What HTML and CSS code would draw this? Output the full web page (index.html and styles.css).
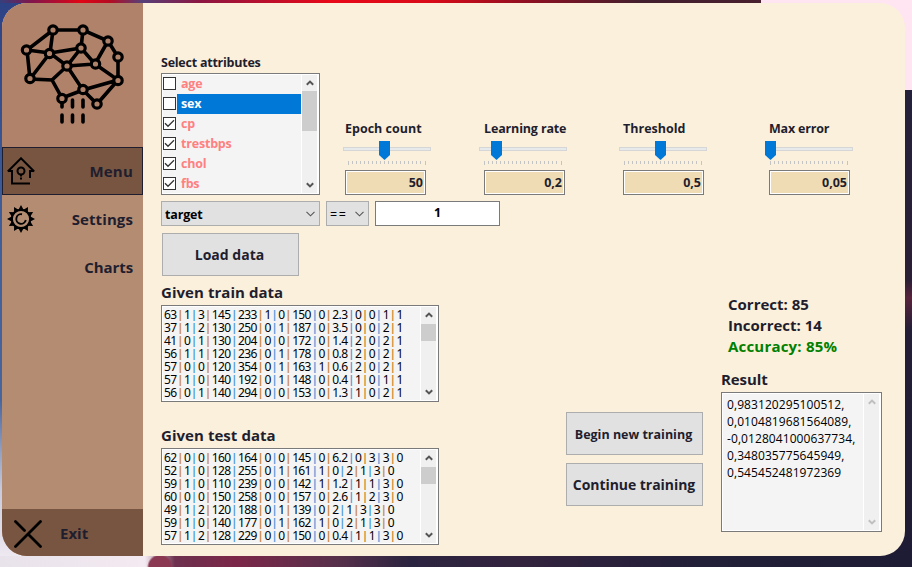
FILE: index.html
```html
<!DOCTYPE html>
<html lang="en">
<head>
<meta charset="utf-8">
<title>Training</title>
<link rel="stylesheet" href="styles.css">
</head>
<body>
<svg class="defs" width="0" height="0">
  <symbol id="up" viewBox="0 0 8 6"><path d="M.8 4.8 4 1.6l3.2 3.2" fill="none" stroke="currentColor" stroke-width="2"/></symbol>
  <symbol id="down" viewBox="0 0 8 6"><path d="M.8 1.2 4 4.4l3.2-3.2" fill="none" stroke="currentColor" stroke-width="2"/></symbol>
  <symbol id="combo" viewBox="0 0 9 6"><path d="M.5.8l4 4 4-4" fill="none" stroke="#555" stroke-width="1.1"/></symbol>
  <symbol id="check" viewBox="0 0 11 11"><path d="M1 5.3l3 3L10 2.3" fill="none" stroke="#333" stroke-width="1.3"/></symbol>
</svg>
<div class="desktop">
<div class="window">
  <nav class="sidebar">
    <div class="logo">
      <svg width="141" height="144" viewBox="2 3 141 144" fill="none" stroke="#000" stroke-width="3.6" stroke-linecap="round">
        <path d="M53 30H83L108 41L118 57V80L97 104L83 90L118 80L95 64L108 41M53 30L27 50L30 79L52 80L62 98L83 90L67 66L95 64L81 48L83 30M53 30L50 53L27 50M50 53L81 48L67 66L50 53L30 79M67 66L52 80M62 98V107M72.500 100V107M83 100V107M62 115V122M72.500 115V122M83 115V122"/>
        <g fill="#b0826a" stroke-width="3.200"><circle cx="53" cy="30" r="4.200"/><circle cx="83" cy="30" r="4.200"/><circle cx="108" cy="41" r="4.200"/><circle cx="118" cy="57" r="4.200"/><circle cx="118" cy="80.500" r="4.200"/><circle cx="97" cy="104" r="4.200"/><circle cx="83" cy="89.500" r="4.200"/><circle cx="62" cy="98.500" r="4.200"/><circle cx="30" cy="78.500" r="4.200"/><circle cx="26.500" cy="50" r="4.200"/><circle cx="49.500" cy="53.500" r="4.200"/><circle cx="81" cy="48" r="4.200"/><circle cx="67" cy="66" r="4.200"/><circle cx="95.500" cy="64" r="4.200"/></g>
      </svg>
    </div>
    <div class="item active">
      <svg width="28" height="28" viewBox="0 0 28 28" fill="none" stroke="#000" stroke-width="2"><path d="M.8 14.500 14 1.300 27.200 14.500M1 14H5V26.500H23M27 14H23V21"/><circle cx="14" cy="14" r="3.500"/><path d="M14 18v1.500M14 20.500v2"/></svg>
      <span class="t-menu">Menu</span>
    </div>
    <div class="item">
      <svg width="28" height="28" viewBox="0 0 28 28" fill="none" stroke="#000" stroke-width="2.200"><circle cx="14" cy="14" r="9.200"/><g fill="#000" stroke="none"><path id="teeth" d="M14 0 17 5.500H11ZM14 28 17 22.500H11ZM0 14 5.500 11V17ZM28 14 22.500 11V17Z"/><use href="#teeth" transform="rotate(30 14 14)"/><use href="#teeth" transform="rotate(60 14 14)"/></g><path d="M15 9.300A4.800 4.800 0 1 0 18.800 15" stroke-width="1.900"/></svg>
      <span class="t-settings">Settings</span>
    </div>
    <div class="item"><span class="t-charts">Charts</span></div>
    <div class="exit">
      <svg width="28" height="28" viewBox="0 0 28 28" stroke="#000" stroke-width="2.800" stroke-linecap="round"><path d="M1.500 1.500 10.500 10.500M26.500 1.500 1.500 26.500M15 15 26.500 26.500"/></svg>
      <span>Exit</span>
    </div>
  </nav>
  <main>
    <section class="top">
      <div class="select">
        <div class="label attr-label">Select attributes</div>
        <div class="listbox checklist">
          <ul>
            <li><i class="box"></i><span>age</span></li>
            <li class="sel"><i class="box"></i><span>sex</span></li>
            <li><i class="box"><svg><use href="#check"/></svg></i><span>cp</span></li>
            <li><i class="box"><svg><use href="#check"/></svg></i><span>trestbps</span></li>
            <li><i class="box"><svg><use href="#check"/></svg></i><span>chol</span></li>
            <li><i class="box"><svg><use href="#check"/></svg></i><span>fbs</span></li>
          </ul>
          <div class="scroll"><svg><use href="#up"/></svg><b class="thumb tall"></b><svg class="end"><use href="#down"/></svg></div>
        </div>
      </div>
      <div class="param epoch"><div class="label">Epoch count</div><svg class="slider" viewBox="0 0 88 26"><rect x=".5" y="6.500" width="87" height="3" fill="#e7eaea" stroke="#d6d6d6"/><path d="M5.500 20V24M82.500 20V24" class="tick"/><path d="M9 20.500H79" class="ticks"/><path d="M36 0H47V14L41.500 19 36 14Z" fill="#0078d7"/></svg><div class="value">50</div></div>
      <div class="param rate"><div class="label">Learning rate</div><svg class="slider" viewBox="0 0 88 26"><rect x=".5" y="6.500" width="87" height="3" fill="#e7eaea" stroke="#d6d6d6"/><path d="M5.500 20V24M82.500 20V24" class="tick"/><path d="M9 20.500H79" class="ticks"/><path d="M12 0H23V14L17.500 19 12 14Z" fill="#0078d7"/></svg><div class="value">0,2</div></div>
      <div class="param threshold"><div class="label">Threshold</div><svg class="slider" viewBox="0 0 88 26"><rect x=".5" y="6.500" width="87" height="3" fill="#e7eaea" stroke="#d6d6d6"/><path d="M5.500 20V24M82.500 20V24" class="tick"/><path d="M9 20.500H79" class="ticks"/><path d="M36 0H47V14L41.500 19 36 14Z" fill="#0078d7"/></svg><div class="value">0,5</div></div>
      <div class="param error"><div class="label">Max error</div><svg class="slider" viewBox="0 0 88 26"><rect x=".5" y="6.500" width="87" height="3" fill="#e7eaea" stroke="#d6d6d6"/><path d="M5.500 20V24M82.500 20V24" class="tick"/><path d="M9 20.500H79" class="ticks"/><path d="M0 0H11V14L5.500 19 0 14Z" fill="#0078d7"/></svg><div class="value">0,05</div></div>
    </section>
    <section class="filter">
      <div class="combo field">target<svg><use href="#combo"/></svg></div>
      <div class="combo op">==<svg><use href="#combo"/></svg></div>
      <div class="input">1</div>
    </section>
    <button class="load">Load data</button>
    <section class="lower">
      <div class="data">
        <h2 class="h-train">Given train data</h2>
        <div class="listbox rows"><div class="lines" id="train"></div><div class="scroll"><svg><use href="#up"/></svg><b class="thumb"></b><svg class="end"><use href="#down"/></svg></div></div>
        <h2 class="h-test">Given test data</h2>
        <div class="listbox rows"><div class="lines" id="test"></div><div class="scroll"><svg><use href="#up"/></svg><b class="thumb"></b><svg class="end"><use href="#down"/></svg></div></div>
      </div>
      <div class="actions">
        <button class="begin">Begin new training</button>
        <button class="continue">Continue training</button>
      </div>
      <div class="outcome">
        <div class="stats"><div class="s1">Correct: 85</div><div class="s2">Incorrect: 14</div><div class="good">Accuracy: 85%</div></div>
        <h2 class="h-result">Result</h2>
        <div class="listbox result">
          <div class="numbers">0,983120295100512,<br>0,0104819681564089,<br>-0,0128041000637734,<br>0,348035775645949,<br>0,545452481972369</div>
          <div class="scroll off"><svg><use href="#up"/></svg><svg class="end"><use href="#down"/></svg></div>
        </div>
      </div>
    </section>
  </main>
</div>
</div>
<script src="rows.js"></script>
</body>
</html>
```
FILE: styles.css
```css
* { box-sizing: border-box; }
body { margin: 0; width: 912px; height: 567px; overflow: hidden; font-family: "Open Sans", "Noto Sans", sans-serif; color: #1f1e2e; }
.defs { position: absolute; }
.desktop {
  width: 912px; height: 567px; padding: 3px 7px 11px 2px;
  background:
    linear-gradient(#ffe5f2, #ffe5f2) 761px 0 / 151px 90px no-repeat,
    radial-gradient(circle at 160px 567px, #8b3852 0 11px, transparent 13px),
    linear-gradient(90deg, #e8e2eb 0, #f4eaf1 145px, #6d304e 175px, #7c2749 235px, #56304b 340px, #2b2440 410px, #33233f 520px, #221f38 700px, #1e1c34 912px) 0 556px / 912px 11px no-repeat,
    linear-gradient(90deg, #35407c 0, #7e164e 30px, #e00514 80px, #b40b22 110px, #554079 142px, #8c1642 200px, #e80818 330px, #d90a18 430px, #8c1022 530px, #43202e 640px, #48202f 761px) 0 0 / 761px 3px no-repeat,
    linear-gradient(#2d4285 0, #3d5c98 200px, #48659d 400px, #c8cbdc 490px, #eee8f0 556px) 0 0 / 30px 567px no-repeat,
    linear-gradient(#25213a 90px, #2a1f35 280px, #57243c 298px, #231e36 330px, #1e1c34 567px);
}
.window { display: flex; width: 903px; height: 553px; border-radius: 25px; overflow: hidden; background: #fbf0dc; }
.sidebar { display: flex; flex-direction: column; width: 141px; background: #b48c72; font-weight: 700; font-size: 15px; }
.logo { height: 144px; background: #b0826a; }
.logo svg, .item svg, .exit svg { display: block; }
.item { display: flex; align-items: center; height: 48px; padding: 0 10px 0 5px; }
.item span { margin-left: auto; }
.t-menu { letter-spacing: .2px; }
.t-settings { letter-spacing: .1px; }
.t-charts { letter-spacing: -.1px; }
.item.active { border: 1px solid #1f1e2e; padding: 0 9px 0 4px; background: #785541; }
.exit { display: flex; align-items: center; gap: 18px; height: 47px; margin-top: auto; padding-left: 12px; background: #785541; }
.exit svg { margin-top: 3px; }
main { display: flex; flex-direction: column; width: 762px; padding: 50px 0 0 18px; }
.label { font-weight: 700; font-size: 12.500px; line-height: 18px; white-space: nowrap; }
.attr-label { padding-top: 1px; letter-spacing: -.24px; }
.top { display: flex; height: 142px; }
.select { width: 159px; }
.listbox { display: flex; border: 1px solid #7a7a7a; background: #f4f4f4; box-shadow: inset 0 0 0 1px #fff; }
.checklist { height: 122px; margin-top: 1px; }
ul { list-style: none; margin: 0; padding: 0 0 0 1px; flex: 1; font-weight: 700; font-size: 12.500px; line-height: 20px; letter-spacing: -.2px; color: #ff8080; }
li { display: flex; height: 20px; }
li span { flex: 1; height: 20px; padding-left: 4px; margin-left: 1px; }
.sel span { background: #0078d7; color: #fff; }
.box { width: 13px; height: 13px; margin-top: 3px; border: 1px solid #333; background: #fff; }
.box svg { display: block; width: 11px; height: 11px; }
.scroll { display: flex; flex-direction: column; align-items: center; width: 17px; margin: 1px 1px 1px 0; padding: 5px 0; border: solid #fff; border-width: 0 1px; background: #f0f0f0; color: #555; }
.scroll svg { width: 8px; height: 6px; flex: none; }
.scroll .end { margin-top: auto; }
.thumb { width: 15px; height: 17px; margin-top: 6px; background: #cdcdcd; }
.thumb.tall { height: 40px; margin-top: 5px; }
.scroll.off { color: #bfbfbf; }
.param { padding-top: 67px; }
.param .label { margin-left: 2px; }
.slider { display: block; width: 88px; height: 26px; margin-top: 3px; }
.tick { stroke: #c4c4c4; }
.ticks { stroke: #c4c4c4; stroke-width: 3; stroke-dasharray: 1 3; transform: translateY(1px); }
.epoch { margin-left: 23px; width: 88px; }
.rate { margin-left: 48px; width: 88px; }
.threshold { margin-left: 52px; width: 88px; }
.error { margin-left: 58px; width: 88px; }
.rate .label { margin-left: 5px; letter-spacing: -.15px; }
.threshold .label { margin-left: 4px; }
.error .label { margin-left: 4px; letter-spacing: -.2px; }
.value { width: 81px; height: 25px; margin: 3px 0 0 2px; padding-right: 2px; border: 1px solid #7a7a7a; box-shadow: inset 0 0 0 1px #fff; background: #efdcb5; font-weight: 700; font-size: 12.500px; line-height: 23px; text-align: right; }
.rate .value { margin-left: 5px; }
.threshold .value, .error .value { margin-left: 4px; }
.filter { display: flex; gap: 6px; margin-top: 6px; height: 25px; }
.combo { display: flex; align-items: center; justify-content: space-between; padding: 1px 4px 0 3px; border: 1px solid #adadad; background: #e1e1e1; font-size: 12.500px; font-weight: 700; letter-spacing: -.15px; color: #000; }
.combo svg { width: 9px; height: 6px; }
.field { width: 159px; }
.op { width: 43px; font-weight: 400; letter-spacing: 1.500px; }
.input { width: 125px; border: 1px solid #7a7a7a; background: #fff; color: #000; font-weight: 700; font-size: 12.500px; line-height: 22px; text-align: center; }
button { width: 137px; height: 43px; padding: 0; border: 1px solid #adadad; background: #e1e1e1; color: #1f1e2e; font: 700 14px "Open Sans", sans-serif; white-space: nowrap; }
.load { margin: 7px 0 0 1px; padding-right: 2px; }
.lower { display: flex; margin-top: 7px; }
.data { width: 278px; }
h2 { margin: 0; height: 20px; font-size: 15px; line-height: 18px; font-weight: 700; white-space: nowrap; }
.rows { height: 97px; margin-top: 2px; }
.h-train, .h-test { letter-spacing: .05px; }
.h-test { margin-top: 24px; }
.lines { flex: 1; padding: 2px 0 0 2px; font: 12px/13px "Noto Sans", sans-serif; letter-spacing: -.620px; color: #000; white-space: nowrap; }
.lines div { height: 13px; }
.lines i { display: inline-block; width: 7.600px; height: 13px; vertical-align: top; font-style: normal; font-size: 11px; font-weight: 700; text-align: center; line-height: 12px; letter-spacing: 0; color: #c88736; }
.lines i:nth-child(even) { color: #4f9bd9; }
.actions { width: 137px; margin-left: 127px; padding-top: 129px; }
.actions button { display: block; margin-bottom: 8px; }
.actions .begin { padding: 1px 2px 0 0; font-size: 12.500px; }
.actions .continue { padding-right: 1px; letter-spacing: -.05px; }
.outcome { width: 161px; margin-left: 18px; padding-top: 11px; }
.stats { padding-left: 7px; font-weight: 700; font-size: 15px; line-height: 21px; }
.good { color: #008000; letter-spacing: .2px; }
.h-result { margin-top: 12px; line-height: 20px; letter-spacing: -.1px; }
.result { height: 140px; margin-top: 3px; }
.numbers { flex: 1; padding: 3px 0 0 5px; font: 12px/17px "Open Sans", sans-serif; letter-spacing: .08px; color: #000; white-space: nowrap; }
```
FILE: rows.js
```js
const sets = {
  train: [
    "63|1|3|145|233|1|0|150|0|2.3|0|0|1|1",
    "37|1|2|130|250|0|1|187|0|3.5|0|0|2|1",
    "41|0|1|130|204|0|0|172|0|1.4|2|0|2|1",
    "56|1|1|120|236|0|1|178|0|0.8|2|0|2|1",
    "57|0|0|120|354|0|1|163|1|0.6|2|0|2|1",
    "57|1|0|140|192|0|1|148|0|0.4|1|0|1|1",
    "56|0|1|140|294|0|0|153|0|1.3|1|0|2|1"
  ],
  test: [
    "62|0|0|160|164|0|0|145|0|6.2|0|3|3|0",
    "52|1|0|128|255|0|1|161|1|0|2|1|3|0",
    "59|1|0|110|239|0|0|142|1|1.2|1|1|3|0",
    "60|0|0|150|258|0|0|157|0|2.6|1|2|3|0",
    "49|1|2|120|188|0|1|139|0|2|1|3|3|0",
    "59|1|0|140|177|0|1|162|1|0|2|1|3|0",
    "57|1|2|128|229|0|0|150|0|0.4|1|1|3|0"
  ]
};
for (const id in sets) {
  document.getElementById(id).innerHTML = sets[id]
    .map(r => "<div>" + r.replace(/\|/g, "<i>|</i>") + "</div>").join("");
}
```
